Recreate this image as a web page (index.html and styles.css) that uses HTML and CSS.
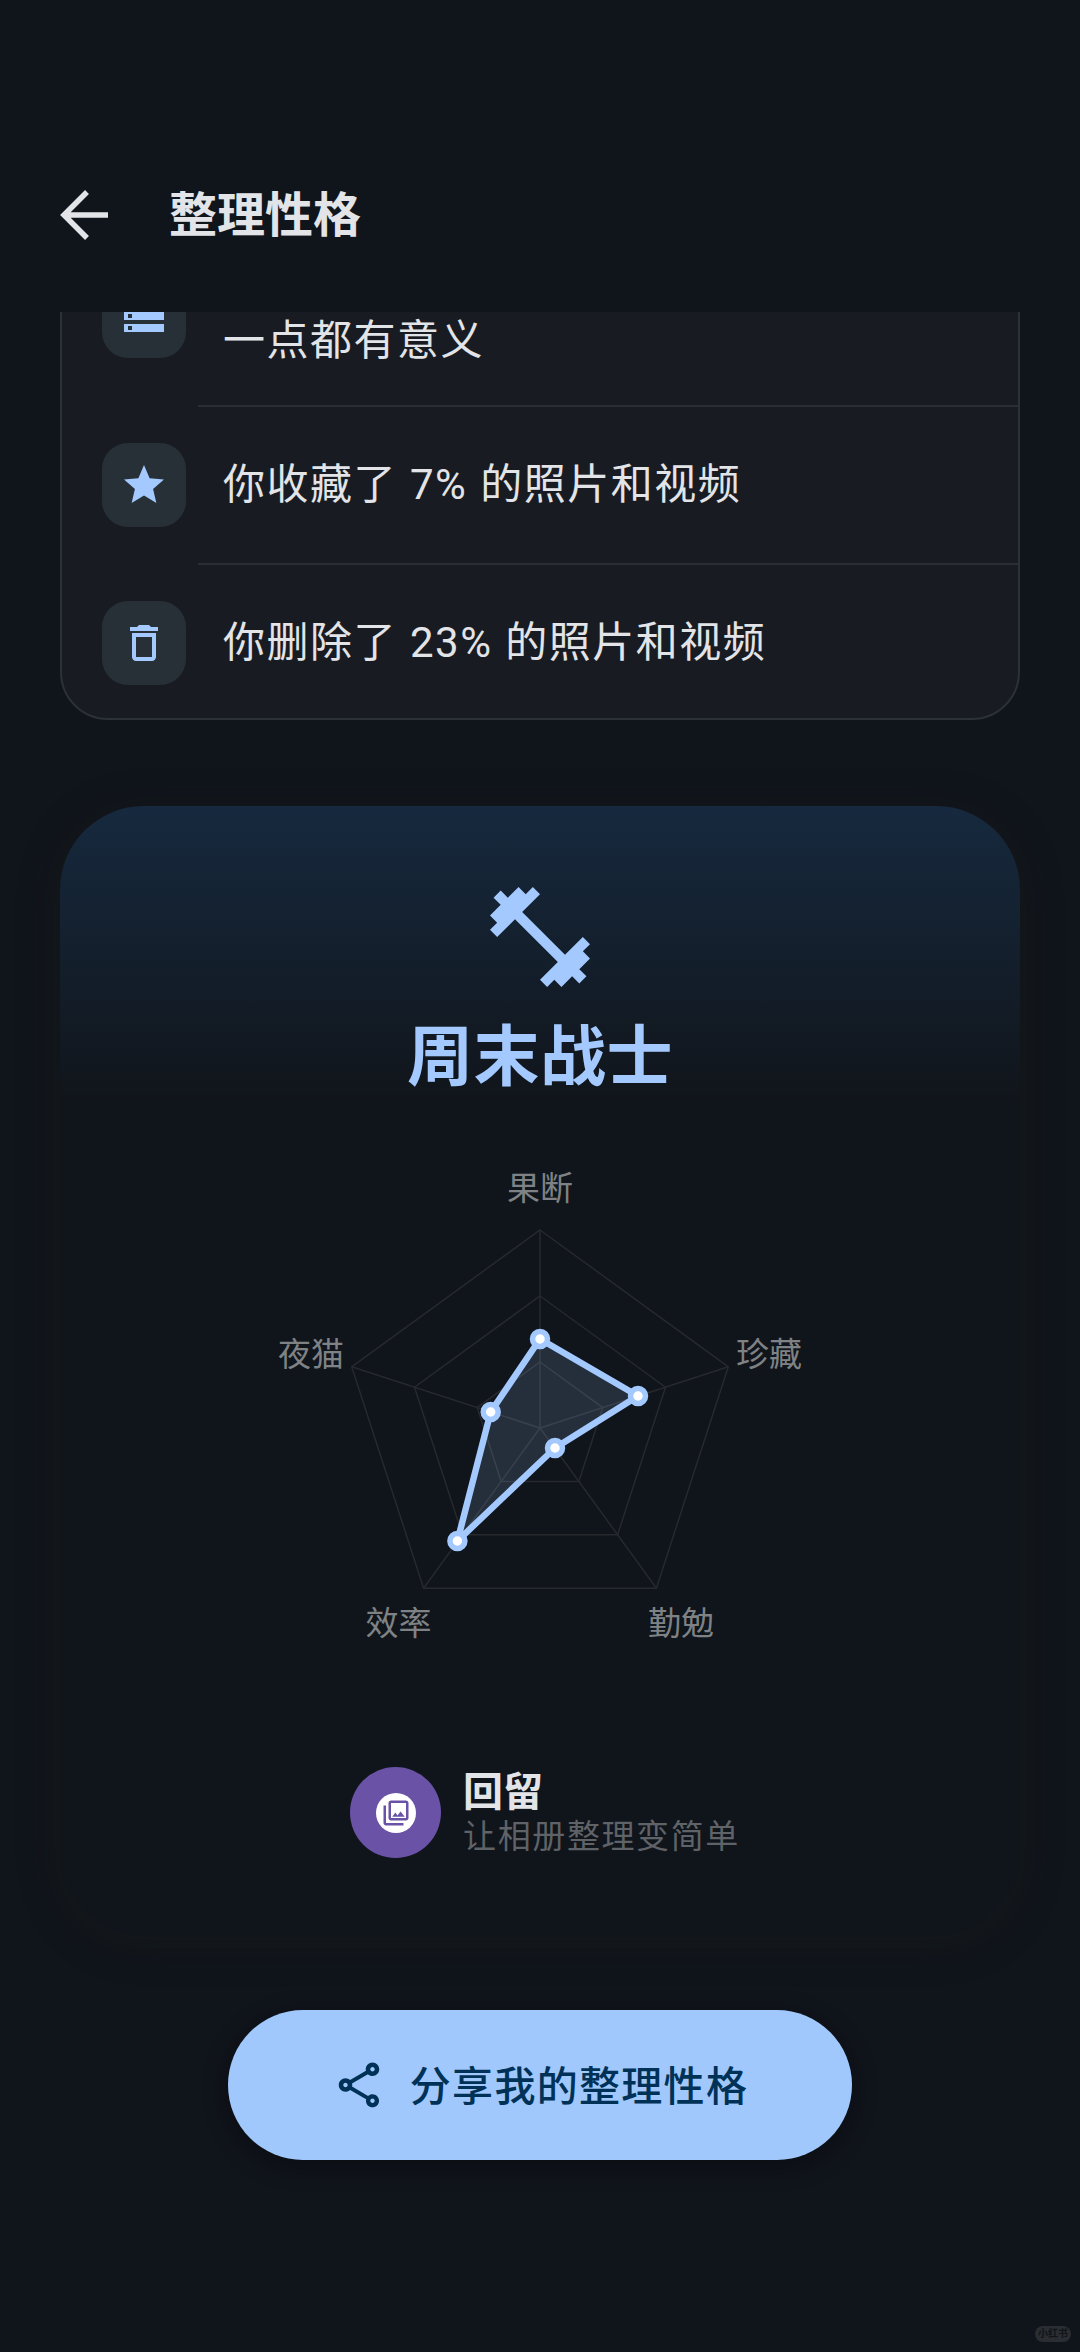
FILE: index.html
```html
<!DOCTYPE html>
<html lang="zh-CN">
<head>
    <meta charset="UTF-8">
    <meta name="viewport" content="width=device-width, initial-scale=1.0">
    <title>整理性格</title>
    <link rel="stylesheet" href="styles.css">
</head>
<body>
    <!-- Top bar -->
    <div class="top-bar">
        <svg class="back-icon" viewBox="0 0 56 56"><path d="M52 28H8M31 5L8 28l23 23"/></svg>
        <div class="page-title">整理性格</div>
    </div>

    <div class="scroll">
        <!-- Stats list, first row is scrolled under the top bar -->
        <div class="stats">
            <div class="stat-row stat-row-first">
                <div class="stat-icon">
                    <svg viewBox="0 0 24 24"><path d="M2 20h20v-4H2v4zm2-3h2v2H4v-2zM2 4v4h20V4H2zm4 3H4V5h2v2zm-4 7h20v-4H2v4zm2-3h2v2H4v-2z"/></svg>
                </div>
                <div class="stat-text stat-text-second-line">一点都有意义</div>
            </div>
            <div class="divider"></div>
            <div class="stat-row">
                <div class="stat-icon">
                    <svg viewBox="0 0 24 24"><path d="M12 17.27L18.18 21l-1.64-7.03L22 9.24l-7.19-.61L12 2 9.19 8.63 2 9.24l5.46 4.73L5.82 21z"/></svg>
                </div>
                <div class="stat-text">你收藏了 7% 的照片和视频</div>
            </div>
            <div class="divider"></div>
            <div class="stat-row stat-row-last">
                <div class="stat-icon">
                    <svg viewBox="0 0 24 24"><path d="M16 9v10H8V9h8m-1.5-6h-5l-1 1H5v2h14V4h-3.5l-1-1zM18 7H6v12c0 1.1.9 2 2 2h8c1.1 0 2-.9 2-2V7z"/></svg>
                </div>
                <div class="stat-text">你删除了 23% 的照片和视频</div>
            </div>
        </div>

        <!-- Share card -->
        <div class="share-card">
            <svg class="type-icon" viewBox="0 0 24 24"><path d="M20.57 14.86L22 13.43 20.57 12 17 15.57 8.43 7 12 3.43 10.57 2 9.14 3.43 7.71 2 5.57 4.14 4.14 2.71 2.71 4.14l1.43 1.43L2 7.71l1.43 1.43L2 10.57 3.43 12 7 8.43 15.57 17 12 20.57 13.43 22l1.43-1.43L16.29 22l2.14-2.14 1.43 1.43 1.43-1.43-1.43-1.43L22 16.29z"/></svg>
            <div class="type-name">周末战士</div>

            <svg class="radar" viewBox="0 0 960 530">
                <g class="radar-grid">
                    <polygon points="480,100 668.3,236.8 596.4,458.2 363.6,458.2 291.7,236.8"/>
                    <polygon points="480,166 605.5,257.2 557.6,404.8 402.4,404.8 354.5,257.2"/>
                    <polygon points="480,232 542.8,277.6 518.8,351.4 441.2,351.4 417.2,277.6"/>
                    <path d="M480 298L480 100M480 298L668.3 236.8M480 298L596.4 458.2M480 298L363.6 458.2M480 298L291.7 236.8"/>
                </g>
                <polygon class="radar-data" points="480,209 578,266 495,318 397.4,411 430.7,282"/>
                <g class="radar-dots">
                    <circle cx="480" cy="209" r="7.5"/>
                    <circle cx="578" cy="266" r="7.5"/>
                    <circle cx="495" cy="318" r="7.5"/>
                    <circle cx="397.4" cy="411" r="7.5"/>
                    <circle cx="430.7" cy="282" r="7.5"/>
                </g>
                <g class="radar-labels">
                    <text x="480" y="70">果断</text>
                    <text x="709" y="236">珍藏</text>
                    <text x="621" y="505">勤勉</text>
                    <text x="338.5" y="505">效率</text>
                    <text x="251" y="236">夜猫</text>
                </g>
            </svg>

            <div class="brand">
                <div class="brand-logo">
                    <div class="brand-logo-inner">
                        <svg viewBox="0 0 24 24"><path d="M20 4v12H8V4h12m0-2H8c-1.1 0-2 .9-2 2v12c0 1.1.9 2 2 2h12c1.1 0 2-.9 2-2V4c0-1.1-.9-2-2-2zm-8.5 9.67l1.69 2.26 2.48-3.1L19 15H9zM2 6v14c0 1.1.9 2 2 2h14v-2H4V6H2z"/></svg>
                    </div>
                </div>
                <div class="brand-text">
                    <div class="brand-name">回留</div>
                    <div class="brand-slogan">让相册整理变简单</div>
                </div>
            </div>
        </div>

        <!-- Share button -->
        <div class="share-button">
            <svg viewBox="0 0 24 24"><path d="M18 16.08c-.76 0-1.44.3-1.96.77L8.91 12.7c.05-.23.09-.46.09-.7s-.04-.47-.09-.7l7.05-4.11c.54.5 1.25.81 2.04.81 1.66 0 3-1.34 3-3s-1.34-3-3-3-3 1.34-3 3c0 .24.04.47.09.7L8.04 9.81C7.5 9.31 6.79 9 6 9c-1.66 0-3 1.34-3 3s1.34 3 3 3c.79 0 1.5-.31 2.04-.81l7.12 4.16c-.05.21-.08.43-.08.65 0 1.61 1.31 2.92 2.92 2.92s2.92-1.31 2.92-2.92-1.31-2.92-2.92-2.92zM18 4c.55 0 1 .45 1 1s-.45 1-1 1-1-.45-1-1 .45-1 1-1zM6 13c-.55 0-1-.45-1-1s.45-1 1-1 1 .45 1 1-.45 1-1 1zm12 7.02c-.55 0-1-.45-1-1s.45-1 1-1 1 .45 1 1-.45 1-1 1z"/></svg>
            <span>分享我的整理性格</span>
        </div>
    </div>

    <div class="watermark">小红书</div>
</body>
</html>
```

FILE: styles.css
```css
* {
    box-sizing: border-box;
}

body {
    font-family: Roboto, "Noto Sans CJK SC", sans-serif;
    background-color: #10141b;
    color: #e2e4e8;
    margin: 0;
    width: 1080px;
    height: 2352px;
    overflow: hidden;
    position: relative;
    display: flex;
    flex-direction: column;
}

/* Top bar */
.top-bar {
    height: 312px;
    flex-shrink: 0;
    padding: 187px 0 0 56px;
    display: flex;
    align-items: flex-start;
    background-color: #10141b;
}

.back-icon {
    width: 56px;
    height: 56px;
    fill: none;
    stroke: #e2e4e8;
    stroke-width: 5.5;
}

.page-title {
    font-size: 48px;
    font-weight: 700;
    line-height: 56px;
    margin: 1px 0 0 57px;
}

.scroll {
    flex: 1;
    overflow: hidden;
}

/* Stats list */
.stats {
    margin: -87px 60px 0;
    background-color: #181c22;
    border: 2px solid #2c3037;
    border-radius: 48px;
}

.stat-row {
    height: 156px;
    padding-left: 40px;
    display: flex;
    align-items: center;
    gap: 37px;
}

.stat-row-first {
    height: 178px;
}

.stat-row-last {
    height: 153px;
    padding-top: 3px;
}

.stat-icon {
    width: 84px;
    height: 84px;
    border-radius: 26px;
    background-color: #272f37;
    display: flex;
    align-items: center;
    justify-content: center;
}

.stat-icon svg {
    width: 48px;
    height: 48px;
    fill: #a3c9ff;
}

.stat-text {
    font-size: 42px;
    line-height: 50px;
    letter-spacing: 1.5px;
    word-spacing: 1px;
    color: #e2e4e8;
}

/* first line of this text is hidden under the top bar */
.stat-text-second-line {
    padding-top: 50px;
}

.divider {
    height: 2px;
    margin-left: 136px;
    background-color: #2a2e33;
}

/* Share card */
.share-card {
    margin: 86px 60px 0;
    padding: 71px 0 78px;
    border-radius: 84px;
    background: linear-gradient(#16293e 0, #11151b 294px, #10141b 295px);
    box-shadow: 0 6px 40px rgba(30, 36, 30, 0.35);
    display: flex;
    flex-direction: column;
    align-items: center;
}

.type-icon {
    width: 120px;
    height: 120px;
    fill: #a3c9ff;
}

.type-name {
    margin-top: 16px;
    font-size: 66px;
    font-weight: 700;
    line-height: 90px;
    color: #a3c9ff;
    letter-spacing: 0.5px;
}

/* Radar chart */
.radar {
    display: block;
    width: 960px;
    height: 530px;
    margin-top: 27px;
}

.radar-grid {
    fill: none;
    stroke: #26292d;
    stroke-width: 1.5;
}

.radar-data {
    fill: rgba(163, 201, 255, 0.15);
    stroke: #a3c9ff;
    stroke-width: 6.5;
    stroke-linejoin: round;
}

.radar-dots circle {
    fill: #fff;
    stroke: #a3c9ff;
    stroke-width: 5.5;
}

.radar-labels text {
    font-size: 33px;
    fill: #7f8285;
    text-anchor: middle;
}

/* Brand row */
.brand {
    margin-top: 107px;
    padding-left: 10px;
    display: flex;
    align-items: center;
    gap: 22px;
}

.brand-logo {
    width: 91px;
    height: 91px;
    border-radius: 50%;
    background-color: #6a52a6;
    display: flex;
    align-items: center;
    justify-content: center;
}

.brand-logo-inner {
    width: 40px;
    height: 40px;
    border-radius: 50%;
    background-color: #fff;
    display: flex;
    align-items: center;
    justify-content: center;
}

.brand-logo-inner svg {
    width: 30px;
    height: 30px;
    fill: #6a52a6;
}

.brand-text {
    padding-top: 3px;
}

.brand-name {
    font-size: 40px;
    font-weight: 700;
    line-height: 44px;
    color: #e2e4e8;
}

.brand-slogan {
    font-size: 33px;
    line-height: 43px;
    letter-spacing: 1.6px;
    color: #5f6266;
}

/* Share button */
.share-button {
    width: 624px;
    height: 150px;
    margin: 74px auto 0;
    border-radius: 75px;
    background-color: #a0c8fc;
    color: #003258;
    box-shadow: 0 6px 24px rgba(0, 0, 0, 0.35);
    display: flex;
    align-items: center;
    justify-content: center;
    gap: 24px;
    font-size: 41px;
    font-weight: 500;
    letter-spacing: 1.3px;
}

.share-button span {
    padding-bottom: 5px;
}

.share-button svg {
    width: 54px;
    height: 54px;
    fill: #003258;
}

.watermark {
    position: absolute;
    right: 9px;
    bottom: 10px;
    width: 36px;
    height: 16px;
    border-radius: 8px;
    background-color: #2a2d32;
    color: #10141b;
    font-size: 10px;
    font-weight: 700;
    line-height: 16px;
    text-align: center;
}
```
